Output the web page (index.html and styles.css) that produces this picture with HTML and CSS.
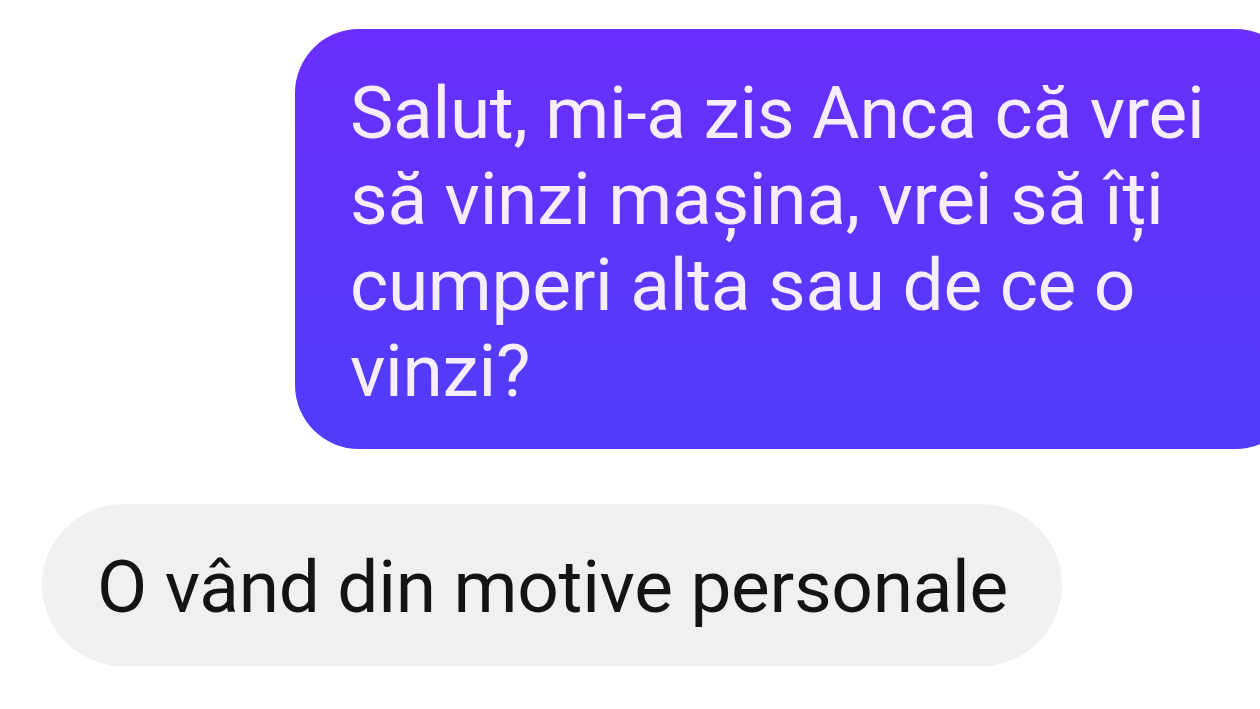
FILE: index.html
```html
<!DOCTYPE html>
<html lang="ro">
<head>
  <meta charset="UTF-8" />
  <meta name="viewport" content="width=device-width, initial-scale=1.0"/>
  <title>Conversatie</title>
  <link rel="stylesheet" href="styles.css">
</head>
<body>

<div class="chat">
  <div class="row sent">
    <div class="bubble bubble-sent">
      Salut, mi-a zis Anca că vrei<br>
      să vinzi mașina, vrei să îți<br>
      cumperi alta sau de ce o<br>
      vinzi?
    </div>
  </div>
  <div class="row received">
    <div class="bubble bubble-received">O vând din motive personale</div>
  </div>
</div>

</body>
</html>
```

FILE: styles.css
```css
body {
  margin: 0;
  background-color: white;
  font-family: Roboto, "Noto Sans", sans-serif;
  overflow: hidden;
}
.chat {
  display: flex;
  flex-direction: column;
  padding-top: 29px;
  gap: 55px;
  width: 1260px;
  height: 709px;
  overflow: hidden;
}
.row {
  display: flex;
}
.sent {
  justify-content: flex-end;
  margin-right: -40px;
}
.received {
  justify-content: flex-start;
  padding-left: 42px;
}
.bubble {
  font-size: 73px;
  line-height: 86px;
  letter-spacing: -0.3px;
}
.bubble-sent {
  width: 1005px;
  box-sizing: border-box;
  padding: 41px 20px 35px 55px;
  border-radius: 64px;
  background: linear-gradient(to bottom, #6a2efd, #503df9);
  color: #f6eeff;
}
.bubble-received {
  padding: 40px 54px 36px 55px;
  border-radius: 81px;
  background-color: #f0f0f0;
  color: #141414;
}
```
